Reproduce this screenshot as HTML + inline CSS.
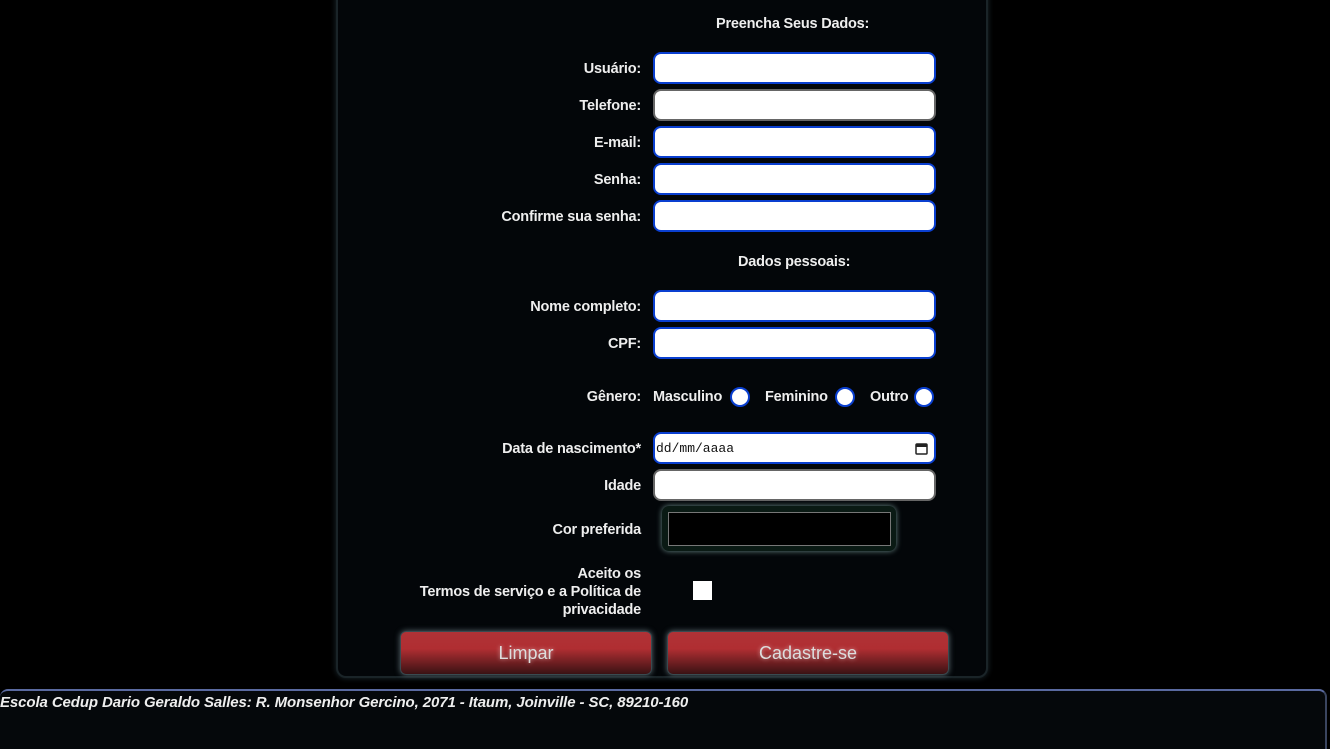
<!DOCTYPE html>
<html><head><meta charset="utf-8"><style>
*{box-sizing:border-box;margin:0;padding:0}
body{width:1330px;height:740px;background:#000;position:relative;overflow:hidden;font-family:"Liberation Sans Narrow","Liberation Sans",sans-serif;font-weight:bold;color:#eee;font-size:14.5px;letter-spacing:-0.2px}
.panel{position:absolute;left:336px;top:-12px;width:652px;height:690px;background:#030609;border:2px solid #1a2428;border-radius:10px;box-shadow:0 0 6px #1c2a30}
.lbl{position:absolute;right:689px;text-align:right;white-space:nowrap;line-height:18px}
.c{position:absolute;white-space:nowrap;line-height:18px}
.in{position:absolute;left:653px;width:283px;height:32px;background:#fff;border:2px solid #0a3fd0;border-radius:8px}
.in.g{border-color:#666}
.r{position:absolute;width:20px;height:20px;border-radius:50%;background:#fff;border:2px solid #0a3fd0}
.btn{position:absolute;top:631px;height:44px;border-radius:6px;border:1px solid #3a4a50;background:linear-gradient(#b03236 0%,#b02e32 40%,#3a1214 100%);box-shadow:0 0 6px #5a6a70;color:#ddd;font-family:"Liberation Sans",sans-serif;font-weight:normal;font-size:18px;letter-spacing:0;text-align:center;line-height:42px;text-shadow:0 0 4px #fff8}
.footer{position:absolute;left:0;top:689px;width:1327px;height:60px;background:#05080b;border-top:2px solid #5a6aa0;border-right:2px solid #3a4560;border-radius:8px 8px 0 0}
</style></head><body>
<div class="panel"></div>
<div class="c" style="left:716px;top:15px">Preencha Seus Dados:</div>
<div class="lbl" style="top:60px">Usuário:</div><div class="in" style="top:52px"></div>
<div class="lbl" style="top:97px">Telefone:</div><div class="in g" style="top:89px"></div>
<div class="lbl" style="top:134px">E-mail:</div><div class="in" style="top:126px"></div>
<div class="lbl" style="top:171px">Senha:</div><div class="in" style="top:163px"></div>
<div class="lbl" style="top:208px">Confirme sua senha:</div><div class="in" style="top:200px"></div>
<div class="c" style="left:738px;top:253px">Dados pessoais:</div>
<div class="lbl" style="top:298px">Nome completo:</div><div class="in" style="top:290px"></div>
<div class="lbl" style="top:335px">CPF:</div><div class="in" style="top:327px"></div>
<div class="lbl" style="top:388px">Gênero:</div>
<div class="c" style="left:653px;top:388px">Masculino</div><div class="r" style="left:730px;top:387px"></div>
<div class="c" style="left:765px;top:388px">Feminino</div><div class="r" style="left:835px;top:387px"></div>
<div class="c" style="left:870px;top:388px">Outro</div><div class="r" style="left:914px;top:387px"></div>
<div class="lbl" style="top:440px">Data de nascimento*</div>
<div class="in" style="top:432px"><span style="position:absolute;left:1px;top:7px;font-family:'Liberation Mono',monospace;font-weight:normal;font-size:13px;letter-spacing:0;color:#111">dd/mm/aaaa</span>
<svg style="position:absolute;right:6px;top:8px" width="13" height="13" viewBox="0 0 13 13"><rect x="1" y="2" width="11" height="10" rx="1" fill="none" stroke="#222" stroke-width="1.5"/><rect x="1" y="2" width="11" height="3" fill="#222"/></svg></div>
<div class="lbl" style="top:477px">Idade</div><div class="in g" style="top:469px"></div>
<div class="lbl" style="top:521px">Cor preferida</div>
<div style="position:absolute;left:662px;top:506px;width:234px;height:45px;border-radius:7px;background:#0a1a14;box-shadow:0 0 6px #6a8a88"></div>
<div style="position:absolute;left:668px;top:512px;width:223px;height:34px;background:#000;border:1px solid #777"></div>
<div class="lbl" style="top:565px">Aceito os</div>
<div class="lbl" style="top:583px">Termos de serviço e a Política de</div>
<div class="lbl" style="top:601px">privacidade</div>
<div style="position:absolute;left:693px;top:581px;width:19px;height:19px;background:#fff"></div>
<div class="btn" style="left:400px;width:252px">Limpar</div>
<div class="btn" style="left:667px;width:282px">Cadastre-se</div>
<div class="footer"><div style="position:absolute;left:0;top:3px;font-style:italic;white-space:nowrap;font-size:15px;letter-spacing:-0.1px">Escola Cedup Dario Geraldo Salles: R. Monsenhor Gercino, 2071 - Itaum, Joinville - SC, 89210-160</div></div>
</body></html>
